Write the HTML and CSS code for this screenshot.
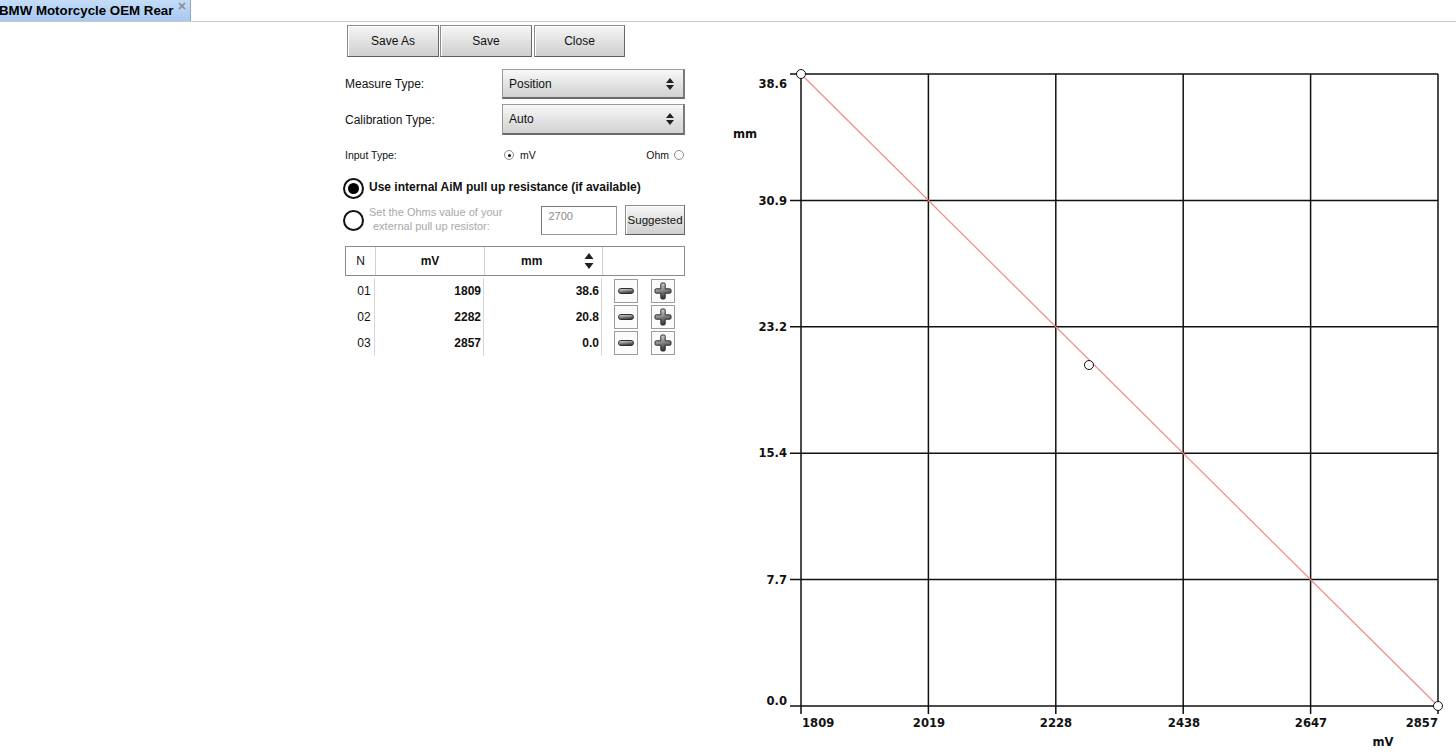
FILE: index.html
```html
<!DOCTYPE html>
<html lang="en">
<head>
<meta charset="utf-8">
<title>BMW Motorcycle OEM Rear</title>
<link rel="stylesheet" href="styles.css">
</head>
<body>
<div class="tabbar">
  <div class="tab">
    <span class="tab-title">BMW Motorcycle OEM Rear</span>
    <svg class="tab-close" viewBox="0 0 8 8" width="8" height="8"><path d="M1 1L7 7M7 1L1 7" stroke="#8a8a8a" stroke-width="1.6"/></svg>
  </div>
</div>

<main class="workspace">
  <section class="panel">
    <div class="toolbar">
      <button class="btn btn-wide">Save As</button>
      <button class="btn btn-wide">Save</button>
      <button class="btn btn-narrow">Close</button>
    </div>

    <div class="field">
      <span class="field-label">Measure Type:</span>
      <div class="select"><span>Position</span><svg class="updown" viewBox="0 0 8 12" width="8" height="12"><path d="M4 0L8 5H0Z M4 12L0 7H8Z" fill="#222"/></svg></div>
    </div>
    <div class="field field-second">
      <span class="field-label">Calibration Type:</span>
      <div class="select"><span>Auto</span><svg class="updown" viewBox="0 0 8 12" width="8" height="12"><path d="M4 0L8 5H0Z M4 12L0 7H8Z" fill="#222"/></svg></div>
    </div>

    <div class="input-type">
      <span class="field-label small">Input Type:</span>
      <label class="mini-option"><span class="mini-radio checked"></span><span>mV</span></label>
      <label class="mini-option right"><span>Ohm</span><span class="mini-radio"></span></label>
    </div>

    <div class="pullup">
      <span class="big-radio checked"></span>
      <span class="pullup-text">Use internal AiM pull up resistance (if available)</span>
    </div>
    <div class="pullup-ext">
      <span class="big-radio"></span>
      <span class="ext-text">Set the Ohms value of your<br><span class="indent">external pull up resistor:</span></span>
      <div class="ohm-box">2700</div>
      <button class="btn btn-suggest">Suggested</button>
    </div>

    <div class="calib-table">
      <div class="thead">
        <div class="th">N</div>
        <div class="th bold">mV</div>
        <div class="th bold th-sort"><span>mm</span><svg class="sort" viewBox="0 0 10 18" width="10" height="18"><path d="M5 1L9.5 7H0.5Z M5 17L0.5 11H9.5Z" fill="#222"/></svg></div>
        <div class="th"></div>
      </div>
      <div class="trow">
        <div class="td num">01</div><div class="td val">1809</div><div class="td val">38.6</div>
        <div class="td acts">
          <button class="icon-btn"><svg viewBox="0 0 18 18" width="18" height="18"><rect x="1.5" y="6.5" width="15" height="5" rx="2.4" fill="url(#metal)" stroke="#2e2e2e" stroke-width="1"/></svg></button>
          <button class="icon-btn"><svg viewBox="0 0 18 18" width="18" height="18"><path d="M6.8 2.2Q6.8 1 8 1H10Q11.2 1 11.2 2.2V6.8H15.8Q17 6.8 17 8V10Q17 11.2 15.8 11.2H11.2V15.8Q11.2 17 10 17H8Q6.8 17 6.8 15.8V11.2H2.2Q1 11.2 1 10V8Q1 6.8 2.2 6.8H6.8Z" fill="url(#metal)" stroke="#2e2e2e" stroke-width="1"/></svg></button>
        </div>
      </div>
      <div class="trow">
        <div class="td num">02</div><div class="td val">2282</div><div class="td val">20.8</div>
        <div class="td acts">
          <button class="icon-btn"><svg viewBox="0 0 18 18" width="18" height="18"><rect x="1.5" y="6.5" width="15" height="5" rx="2.4" fill="url(#metal)" stroke="#2e2e2e" stroke-width="1"/></svg></button>
          <button class="icon-btn"><svg viewBox="0 0 18 18" width="18" height="18"><path d="M6.8 2.2Q6.8 1 8 1H10Q11.2 1 11.2 2.2V6.8H15.8Q17 6.8 17 8V10Q17 11.2 15.8 11.2H11.2V15.8Q11.2 17 10 17H8Q6.8 17 6.8 15.8V11.2H2.2Q1 11.2 1 10V8Q1 6.8 2.2 6.8H6.8Z" fill="url(#metal)" stroke="#2e2e2e" stroke-width="1"/></svg></button>
        </div>
      </div>
      <div class="trow">
        <div class="td num">03</div><div class="td val">2857</div><div class="td val">0.0</div>
        <div class="td acts">
          <button class="icon-btn"><svg viewBox="0 0 18 18" width="18" height="18"><rect x="1.5" y="6.5" width="15" height="5" rx="2.4" fill="url(#metal)" stroke="#2e2e2e" stroke-width="1"/></svg></button>
          <button class="icon-btn"><svg viewBox="0 0 18 18" width="18" height="18"><path d="M6.8 2.2Q6.8 1 8 1H10Q11.2 1 11.2 2.2V6.8H15.8Q17 6.8 17 8V10Q17 11.2 15.8 11.2H11.2V15.8Q11.2 17 10 17H8Q6.8 17 6.8 15.8V11.2H2.2Q1 11.2 1 10V8Q1 6.8 2.2 6.8H6.8Z" fill="url(#metal)" stroke="#2e2e2e" stroke-width="1"/></svg></button>
        </div>
      </div>
    </div>
    <svg class="defs" width="0" height="0">
      <defs>
        <linearGradient id="metal" x1="0" y1="0" x2="0.3" y2="1">
          <stop offset="0" stop-color="#e8e8e8"/>
          <stop offset="0.45" stop-color="#9a9a9a"/>
          <stop offset="1" stop-color="#3a3a3a"/>
        </linearGradient>
      </defs>
    </svg>
  </section>

  <!-- calibration curve: mV on x, mm on y -->
  <svg class="chart" viewBox="720 22 736 733" width="736" height="733">
    <g class="grid" stroke="#111" stroke-width="1.5" fill="none">
      <path d="M801 74H1438M801 200.4H1438M801 326.8H1438M801 453.2H1438M801 579.6H1438M801 706H1438"/>
      <path d="M801 74V714M928.4 74V714M1055.8 74V714M1183.2 74V714M1310.6 74V714M1438 74V714"/>
      <path d="M790 74H801M790 200.4H801M790 326.8H801M790 453.2H801M790 579.6H801M790 706H801"/>
    </g>
    <g class="ylabels" text-anchor="end">
      <text x="787" y="87.5">38.6</text>
      <text x="787" y="204.6">30.9</text>
      <text x="787" y="331">23.2</text>
      <text x="787" y="457.4">15.4</text>
      <text x="787" y="583.8">7.7</text>
      <text x="787" y="704.5">0.0</text>
    </g>
    <g class="xlabels" text-anchor="middle">
      <text x="802" y="726.5" text-anchor="start">1809</text>
      <text x="929" y="726.5">2019</text>
      <text x="1056" y="726.5">2228</text>
      <text x="1184" y="726.5">2438</text>
      <text x="1311" y="726.5">2647</text>
      <text x="1438" y="726.5" text-anchor="end">2857</text>
    </g>
    <text class="axis-name" x="745" y="138" text-anchor="middle">mm</text>
    <text class="axis-name" x="1383" y="745.5" text-anchor="middle">mV</text>
    <path d="M801 74L1438 706" stroke="#f08a8a" stroke-width="1.2"/>
    <g fill="#fff" stroke="#111" stroke-width="1">
      <circle cx="801" cy="74" r="4.5"/>
      <circle cx="1089" cy="365" r="4.5"/>
      <circle cx="1438" cy="706" r="4.5"/>
    </g>
  </svg>
</main>
</body>
</html>
```

FILE: styles.css
```css
* { box-sizing: border-box; }

html, body {
  margin: 0;
  padding: 0;
  background: #fff;
  font-family: "Liberation Sans", Arial, sans-serif;
  font-size: 12px;
  color: #111;
  overflow: hidden;
}

/* document tab strip */
.tabbar {
  height: 22px;
  border-bottom: 1px solid #c8c8c8;
  display: flex;
}

.tab {
  width: 191px;
  height: 21px;
  background: linear-gradient(#c4dcf8, #a7c8f0);
  border-right: 1px solid #8ea9c8;
  display: flex;
  align-items: center;
  position: relative;
}

.tab-title {
  font-weight: bold;
  font-size: 13.3px;
  color: #000;
  white-space: nowrap;
  margin-left: -1px;
}

.tab-close {
  position: absolute;
  right: 4px;
  top: 2px;
}

/* main area */
.workspace {
  display: flex;
  height: 733px;
  padding-left: 345px;
}

.panel {
  width: 340px;
  flex: none;
}

.chart {
  margin-left: 35px;
  flex: none;
  display: block;
}

.chart text {
  font-family: "DejaVu Sans", Verdana, sans-serif;
  font-weight: bold;
  font-size: 11.6px;
  fill: #111;
}

/* buttons */
.btn {
  font-family: "Liberation Sans", Arial, sans-serif;
  font-size: 12px;
  color: #111;
  background: linear-gradient(#f6f6f6, #e2e2e2 50%, #cfcfcf);
  border: 1px solid #8c8c8c;
  border-bottom-color: #5e5e5e;
  border-right-color: #6a6a6a;
  box-shadow: inset 1px 1px 0 #fff;
  padding: 0;
  margin: 0;
}

.toolbar {
  display: flex;
  gap: 1px;
  margin-top: 3px;
  padding-left: 2px;
}

.toolbar .btn { height: 32px; }
.btn-wide { width: 92px; }
.btn-narrow { width: 91px; margin-left: 1px; }

/* labelled selectors */
.field {
  display: flex;
  align-items: center;
  height: 30px;
  margin-top: 12px;
}

.field-second {
  margin-top: 5px;
  height: 31px;
}

.field-label {
  width: 157px;
  flex: none;
}

.field-label.small { font-size: 10.5px; }

.select {
  width: 183px;
  height: 100%;
  background: linear-gradient(#f8f8f8, #e4e4e4 50%, #d2d2d2);
  border: 1px solid #9a9a9a;
  border-bottom: 2px solid #6a6a6a;
  border-right: 2px solid #7a7a7a;
  display: flex;
  align-items: center;
  justify-content: space-between;
  padding: 0 9px 0 6px;
  font-size: 12px;
}

/* input type */
.input-type {
  display: flex;
  align-items: center;
  height: 18px;
  margin-top: 11px;
  font-size: 10.5px;
}

.mini-option {
  display: flex;
  align-items: center;
  gap: 6px;
  margin-left: 2px;
}

.mini-option.right { margin-left: auto; gap: 5px; margin-right: 1px; }

.mini-radio {
  width: 10px;
  height: 10px;
  border-radius: 50%;
  border: 1px solid #8a8a8a;
  background: #fff;
  position: relative;
}

.mini-radio.checked::after {
  content: "";
  position: absolute;
  left: 2.5px;
  top: 2.5px;
  width: 3px;
  height: 3px;
  border-radius: 50%;
  background: #111;
}

/* pull-up resistor choice */
.pullup {
  display: flex;
  align-items: center;
  height: 22px;
  margin-top: 13px;
  gap: 5px;
  margin-left: -2px;
}

.pullup-text {
  font-weight: bold;
  font-size: 12px;
  margin-top: -3px;
}

.big-radio {
  width: 21px;
  height: 21px;
  border-radius: 50%;
  border: 2px solid #111;
  background: #fff;
  flex: none;
  position: relative;
}

.big-radio.checked::after {
  content: "";
  position: absolute;
  left: 3px;
  top: 3px;
  width: 11px;
  height: 11px;
  border-radius: 50%;
  background: #000;
}

.pullup-ext {
  display: flex;
  align-items: center;
  height: 30px;
  margin-top: 6px;
  margin-left: -2px;
}

.ext-text {
  color: #a8a8a8;
  font-size: 11px;
  line-height: 14px;
  margin-left: 5px;
  width: 173px;
  margin-top: -3px;
}

.ext-text .indent { padding-left: 4px; }

.ohm-box {
  width: 76px;
  height: 29px;
  border: 1px solid #9a9a9a;
  border-top-color: #777;
  border-left-color: #777;
  color: #8a8a8a;
  font-size: 11px;
  padding: 3px 6px;
}

.btn-suggest {
  width: 60px;
  height: 30px;
  margin-left: 8px;
  font-size: 11.5px;
}

/* calibration points */
.calib-table {
  margin-top: 11px;
}

.thead, .trow {
  display: grid;
  grid-template-columns: 30px 109px 118px 1fr;
}

.thead {
  height: 30px;
  border: 1px solid #8a8a8a;
}

.th {
  display: flex;
  align-items: center;
  justify-content: center;
  border-right: 1px solid #d0d0d0;
}

.th:last-child { border-right: none; }
.th.bold { font-weight: bold; }

.th-sort {
  justify-content: flex-start;
  padding-left: 36px;
  position: relative;
}

.sort {
  position: absolute;
  right: 8px;
  top: 5px;
}

.trow {
  height: 26px;
}

.calib-table .thead + .trow { margin-top: 2px; }

.td {
  display: flex;
  align-items: center;
  border-right: 1px solid #d6d6d6;
}

.td.num { justify-content: center; padding-left: 9px; }
.td.val { justify-content: flex-end; font-weight: bold; padding-right: 2px; }
.td.acts { border-right: none; padding-left: 12px; gap: 13px; }

.icon-btn {
  width: 24px;
  height: 24px;
  padding: 0;
  border: 1px solid #9c9c9c;
  background: #fbfbfb;
  display: flex;
  align-items: center;
  justify-content: center;
}

.icon-btn svg { display: block; }

.defs { position: absolute; }
```
